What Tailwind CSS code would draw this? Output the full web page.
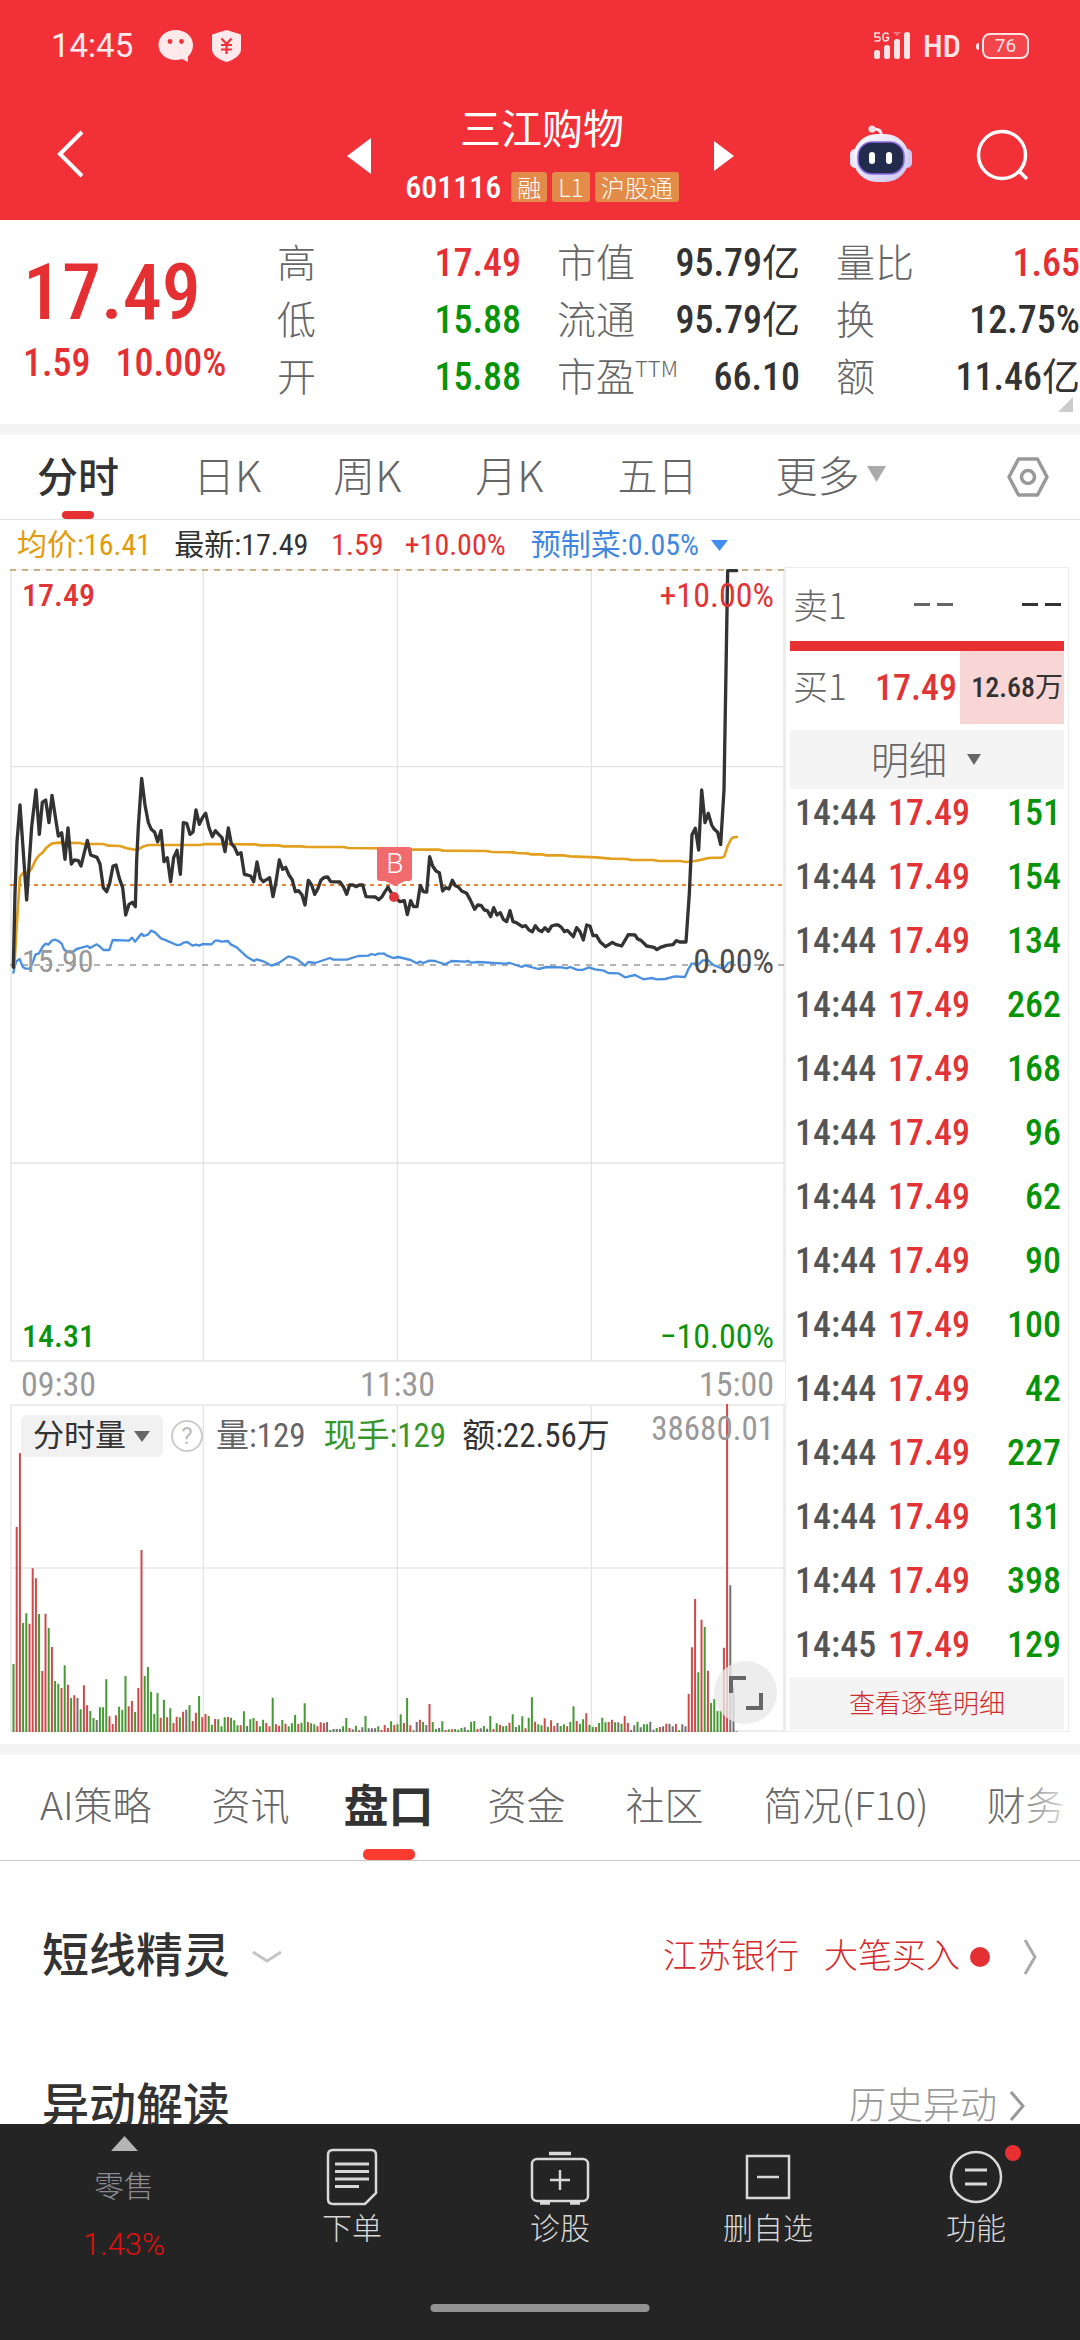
<!DOCTYPE html>
<html lang="zh-CN">
<head>
<meta charset="utf-8">
<meta name="viewport" content="width=device-width, initial-scale=1">
<title>三江购物 601116</title>
<script src="https://cdn.jsdelivr.net/npm/@tailwindcss/browser@4"></script>
</head>
<body class="flex h-screen flex-col overflow-hidden bg-white font-['Roboto_Condensed','Noto_Sans_CJK_SC',sans-serif] text-[#333]">

<header class="shrink-0 bg-[#f13038] text-white">
  <!-- status bar -->
  <div class="flex h-[92px] items-center px-[51px]">
    <span class="font-['Roboto','Noto_Sans_CJK_SC',sans-serif] text-[33px] leading-10 text-white/90">14:45</span>
    <svg class="ml-[25px] h-8 w-[36px]" viewBox="0 0 36 32" fill="#ffe9ea"><path d="M17.500 0C27.500 0 35 6.500 35 15c0 5-2 8.500-5 11.500l0 5.500-6-3a21 21 0 0 1-6.500 1C8 30 .5 23.500.5 15S8 0 17.500 0z"/><circle cx="12" cy="11.500" r="2.400" fill="#f13038"/><circle cx="23.500" cy="11.500" r="2.400" fill="#f13038"/></svg>
    <svg class="ml-[18px] h-8 w-[29px]" viewBox="0 0 29 32"><path d="M14.500 0 29 4.500V19c0 6-6 10.500-14.500 13C6 29.500 0 25 0 19V4.500z" fill="#ffe9ea"/><path d="M9.500 8.500l5 5.500 5-5.500M14.500 14v10M9 15h11M9 19.500h11" fill="none" stroke="#f13038" stroke-width="2.200"/></svg>
    <svg class="ml-auto h-[30px] w-[40px]" viewBox="0 0 40 30" fill="#ffe3e5"><rect x="1" y="19" width="6" height="9" rx="2.500"/><rect x="11" y="14" width="6" height="14" rx="2.500"/><rect x="21" y="8" width="6" height="20" rx="2.500"/><rect x="31" y="1" width="6" height="27" rx="2.500"/><path d="M20 1h8l-4 4z" opacity=".4"/><path d="M7 2H2v4h3.500q1.500 0 1.500 2t-1.500 2H1.500M15.500 3.500Q15 2 12.500 2 10 2 10 6t2.500 4q3 0 3-3.500h-2.500" fill="none" stroke="#ffe3e5" stroke-width="1.600"/></svg>
    <span class="ml-[10px] text-[32px] leading-10 font-medium text-[#ffe3e5]">HD</span>
    <span class="ml-[15px] flex items-center">
      <span class="mr-[3px] h-[7px] w-[3px] rounded-l bg-[#ffe3e5]"></span>
      <span class="flex h-[26px] w-[47px] items-center justify-center rounded-lg border-2 border-[#ffe3e5] bg-white/10 font-['Roboto',sans-serif] text-[19px] leading-5 text-[#ffe3e5]">76</span>
    </span>
  </div>
  <!-- title bar -->
  <div class="flex h-32 items-start px-[52px]">
    <div class="flex flex-1 pt-[37px] pl-1">
      <button type="button" aria-label="返回"><svg class="h-[50px] w-[30px]" viewBox="0 0 30 50" fill="none" stroke="#fff" stroke-width="4"><path d="M26 3 4 25l22 22"/></svg></button>
    </div>
    <button type="button" aria-label="上一只" class="pt-[45px]"><svg class="h-[38px] w-6" viewBox="0 0 24 38"><path d="M24 1v36L0 19z" fill="#fff"/></svg></button>
    <div class="flex w-[343px] flex-col items-center">
      <h1 class="pt-[4px] font-['Noto_Sans_CJK_SC',sans-serif] text-[41px] leading-[60px]">三江购物</h1>
      <div class="mt-[13px] flex items-center gap-[5px] text-[32px] leading-[36px]">
        <span class="mr-[5px] font-medium">601116</span>
        <span class="rounded-[3px] bg-[#e38b49] px-[6px] font-['Noto_Sans_CJK_SC',sans-serif] text-[24px] leading-[30px] font-light">融</span>
        <span class="rounded-[3px] bg-[#e38b49] px-[6px] font-['Noto_Sans_CJK_SC',sans-serif] text-[24px] leading-[30px] font-light">L1</span>
        <span class="rounded-[3px] bg-[#e38b49] px-[6px] font-['Noto_Sans_CJK_SC',sans-serif] text-[24px] leading-[30px] font-light">沪股通</span>
      </div>
    </div>
    <button type="button" aria-label="下一只" class="pt-[47px] pr-1"><svg class="h-[34px] w-5" viewBox="0 0 20 34"><path d="M0 2v30l20-15z" fill="#fff"/></svg></button>
    <div class="flex flex-1 justify-end gap-[64px] pt-[33px]">
      <button type="button" aria-label="智能助手"><svg class="h-[58px] w-[62px]" viewBox="0 0 62 58">
        <defs><linearGradient id="shell" x1="0" y1="0" x2="1" y2="1"><stop offset="0" stop-color="#fff"/><stop offset="1" stop-color="#c9c3f0"/></linearGradient></defs>
        <path d="M22 4q10-1 9 7" fill="none" stroke="#f3e9f7" stroke-width="3"/><circle cx="22" cy="4" r="3.600" fill="#f3e0ea"/>
        <rect x="0" y="24" width="10" height="19" rx="5" fill="#ece6f8"/><rect x="52" y="24" width="10" height="19" rx="5" fill="#cfc8f2"/>
        <rect x="3" y="9" width="56" height="48" rx="24" fill="url(#shell)"/>
        <rect x="8" y="17" width="46" height="32" rx="14" fill="#232b4d" stroke="#8a6be0" stroke-width="1.500"/>
        <rect x="19" y="27" width="6" height="12" rx="3" fill="#fff"/><rect x="36" y="27" width="6" height="12" rx="3" fill="#fff"/></svg></button>
      <button type="button" aria-label="搜索"><svg class="h-[54px] w-[52px]" viewBox="0 0 52 54" fill="none" stroke="#fff" stroke-width="3.500"><circle cx="26" cy="28" r="23.500"/><path d="M42 43l9 9"/></svg></button>
    </div>
  </div>
</header>

<main class="min-h-0 flex-1 overflow-hidden">
  <!-- quote summary -->
  <section class="relative flex h-[204px] pt-[15px]">
    <div class="w-[277px] pl-[23px] font-medium text-[#e53033]">
      <p class="pt-[10px] text-[78px] leading-[96px]">17.49</p>
      <p class="flex gap-[25px] text-[38px] leading-[44px]"><span>1.59</span><span>10.00%</span></p>
    </div>
    <dl class="grid flex-1 grid-cols-[244px_243px_1fr] content-start gap-x-9 text-[38px] leading-[57px] font-medium">
      <div class="flex justify-between"><dt class="font-['Noto_Sans_CJK_SC',sans-serif] text-[39px] leading-[51px] font-light text-[#666]">高</dt><dd class="text-[#e53033]">17.49</dd></div>
      <div class="flex justify-between"><dt class="font-['Noto_Sans_CJK_SC',sans-serif] text-[39px] leading-[51px] font-light text-[#666]">市值</dt><dd>95.79<span class="font-normal">亿</span></dd></div>
      <div class="flex justify-between"><dt class="font-['Noto_Sans_CJK_SC',sans-serif] text-[39px] leading-[51px] font-light text-[#666]">量比</dt><dd class="text-[#e53033]">1.65</dd></div>
      <div class="flex justify-between"><dt class="font-['Noto_Sans_CJK_SC',sans-serif] text-[39px] leading-[51px] font-light text-[#666]">低</dt><dd class="text-[#089408]">15.88</dd></div>
      <div class="flex justify-between"><dt class="font-['Noto_Sans_CJK_SC',sans-serif] text-[39px] leading-[51px] font-light text-[#666]">流通</dt><dd>95.79<span class="font-normal">亿</span></dd></div>
      <div class="flex justify-between"><dt class="font-['Noto_Sans_CJK_SC',sans-serif] text-[39px] leading-[51px] font-light text-[#666]">换</dt><dd>12.75%</dd></div>
      <div class="flex justify-between"><dt class="font-['Noto_Sans_CJK_SC',sans-serif] text-[39px] leading-[51px] font-light text-[#666]">开</dt><dd class="text-[#089408]">15.88</dd></div>
      <div class="flex justify-between"><dt class="flex font-['Noto_Sans_CJK_SC',sans-serif] text-[39px] leading-[51px] font-light text-[#666]">市盈<span class="text-[22px] leading-9">TTM</span></dt><dd>66.10</dd></div>
      <div class="flex justify-between"><dt class="font-['Noto_Sans_CJK_SC',sans-serif] text-[39px] leading-[51px] font-light text-[#666]">额</dt><dd>11.46<span class="font-normal">亿</span></dd></div>
    </dl>
    <svg class="absolute right-[7px] bottom-[12px] h-[15px] w-[15px]" viewBox="0 0 15 15"><path d="M15 0v15H0z" fill="#ccc"/></svg>
  </section>

  <div class="h-[11px] bg-[#f4f4f4]"></div>

  <!-- period tabs -->
  <nav class="flex h-[85px] items-center border-b border-[#e2e2e2] pr-[31px] pl-[37px] font-['Noto_Sans_CJK_SC',sans-serif] text-[42px] leading-[78px] font-light text-[#666]">
    <button type="button" class="relative mr-[74px] pb-[6px] text-[41px] font-medium text-[#333]">分时<span class="absolute bottom-0 left-[25px] h-2 w-[32px] rounded bg-[#e53033]"></span></button>
    <button type="button" class="mr-[72px] pb-[6px]">日K</button>
    <button type="button" class="mr-[74px] pb-[6px]">周K</button>
    <button type="button" class="mr-[74px] pb-[6px]">月K</button>
    <button type="button" class="mr-[78px] pb-[6px] text-[40px]">五日</button>
    <button type="button" class="flex items-center gap-[7px] pb-[6px]">更多<svg class="h-4 w-[19px]" viewBox="0 0 19 16"><path d="M0 0h19l-9.500 16z" fill="#aaa"/></svg></button>
    <button type="button" aria-label="设置" class="ml-auto"><svg class="h-[40px] w-[42px]" viewBox="0 0 42 40" fill="none" stroke="#999" stroke-width="3.500" stroke-linejoin="round"><path d="M11.500 2h19L40 20l-9.500 18h-19L2 20z"/><circle cx="21" cy="20" r="6.500"/></svg></button>
  </nav>

  <div class="flex h-[47px] items-center pt-[3px] pl-[17px] text-[30px] leading-[44px]">
    <span class="mr-[23px] text-[#e39b0b]">均价:16.41</span>
    <span class="mr-[23px]">最新:17.49</span>
    <span class="mr-[21px] text-[#e53033]">1.59</span>
    <span class="mr-[25px] text-[#e53033]">+10.00%</span>
    <button type="button" class="flex items-center gap-[12px] text-[#3f87e0]">预制菜:0.05%<svg class="h-[11px] w-[17px]" viewBox="0 0 17 11"><path d="M0 0h17l-8.500 11z" fill="#3f8ef0"/></svg></button>
  </div>

  <div class="flex pr-[11px] pl-[10px]">
    <!-- charts -->
    <div class="min-w-0 flex-1 pt-[2px]">
      <div class="relative h-[793px] text-[34px] leading-9">
        <svg class="absolute inset-0 h-full w-full" viewBox="30 27 2325 2379" preserveAspectRatio="none" fill="none">
          <g stroke="#e4e4e4" stroke-width="4"><path d="M610 27v2379M1192 27v2379M1774 27v2379M30 620h2325M30 1809h2325"/></g>
          <rect x="33" y="28" width="2319" height="2375" stroke="#ececec" stroke-width="6"/>
          <path d="M30 30h2325" stroke="#c09b62" stroke-width="5" stroke-dasharray="18 18"/>
          <path d="M30 975h2325" stroke="#ea8433" stroke-width="6" stroke-dasharray="12 12"/>
          <path d="M30 1215h2325" stroke="#999" stroke-width="5" stroke-dasharray="18 18"/>
          <g stroke-linejoin="round" stroke-linecap="round">
            <g stroke="#4a8fe0" stroke-width="7">
              <polyline points="40,1238 48,1205 59,1197 68,1220 77,1226 90,1226 97,1210 107,1183 117,1180 128,1160 137,1151 145,1154 155,1142 165,1139 175,1143 185,1151 192,1168 200,1175 215,1178 230,1167 245,1163 262,1158 270,1164 290,1153 300,1160 310,1170 328,1170 338,1140 387,1142 396,1133 405,1145 424,1121 432,1128 445,1123 453,1112 465,1117 483,1135 500,1142 530,1155 541,1154 550,1148 562,1146 578,1157 588,1154 598,1157 608,1152 635,1153 645,1142 655,1142 665,1145 684,1143 692,1153 710,1162 740,1190 762,1203 770,1198 790,1204 815,1217 838,1208 865,1189 880,1193 893,1199 915,1217 925,1206 945,1209 990,1194 1000,1199 1040,1199 1075,1188 1105,1187 1115,1182 1125,1185 1135,1181 1152,1181"/>
              <polyline transform="translate(1140 600)" points="12,581 20,586 40,594 55,591 92,600 110,610 120,605 130,609 148,602 165,603 195,613 215,603 255,605 265,603 273,608 295,606 375,611 390,609 425,621 435,616 475,627 500,621 545,622 560,625 570,621 590,629 607,630 627,622 645,628 672,632 685,639 715,640 735,652 765,645 790,658 815,654 830,658 855,657 885,649 915,651 925,628 935,611 960,610 968,601 985,601 1000,615 1022,624 1033,624 1045,609 1058,605"/>
            </g>
            <g stroke="#e3a01e" stroke-width="8">
              <polyline points="43,1220 50,1100 60,950 70,938 85,938 95,925 108,898 118,885 128,878 140,862 155,851 175,848 240,849 250,852 310,852 325,857 360,858 385,866 412,870 428,860 445,855 600,855 615,852 765,853 780,856 835,856 850,859 905,859 920,861 1030,861 1045,864 1175,865"/>
              <polyline transform="translate(1140 600)" points="35,265 95,269 175,269 190,272 320,273 335,276 400,277 410,279 440,280 455,283 485,283 500,286 550,286 570,289 650,292 690,296 740,297 755,300 820,300 835,303 900,303 920,306 945,303 965,299 985,294 1025,293 1033,289 1043,258 1053,238 1060,232 1071,231"/>
            </g>
            <g stroke="#333" stroke-width="10">
              <polyline points="40,1222 45,1000 51,845 60,735 80,1020 95,800 108,690 118,823 127,727 137,720 147,788 156,706 175,828 185,818 195,898 204,804 214,912 223,900 235,902 243,918 262,841 272,885 291,892 300,912 310,983 320,995 329,970 339,918 348,915 358,955 368,983 377,1065 387,1033 397,1027 406,1040 410,900 415,800 425,655 435,735 445,788 454,808 464,817 473,845 483,812 492,905 502,893 512,965 521,893 531,871 541,943 550,788 560,790 570,823 579,816 588,750 598,793 608,772 617,760 627,803 637,830 646,812 656,823 666,833 675,875 685,804 694,851 704,862 713,883 723,878 733,943 742,945 752,948 761,965 771,906 781,955 790,965 809,953 819,1010 828,965 838,900 848,928 857,922 867,945 877,960 886,995 896,992 906,1005 915,1035 925,961 935,975 944,1003 954,985 963,960 973,952 983,951 992,965 1020,966 1030,980 1040,1003 1049,975 1059,975 1068,980 1078,975 1088,975 1098,1010 1126,1011 1136,1019 1146,1010 1155,995 1164,982"/>
              <polyline transform="translate(1140 600)" points="24,382 41,410 60,425 73,422 82,464 92,422 101,440 111,440 121,376 130,395 140,396 149,290 158,318 168,333 178,338 188,393 197,383 207,387 217,361 226,377 235,381 245,393 260,400 270,418 284,448 293,435 303,436 313,450 322,452 332,470 341,443 351,465 361,458 370,478 380,485 390,452 399,485 409,488 427,500 437,497 447,510 457,515 466,497 476,510 485,515 495,503 505,514 515,498 525,495 535,495 545,503 553,515 562,511 580,530 590,503 600,515 610,540 620,495 630,498 639,527 649,526 660,545 677,560 697,547 707,553 725,558 745,524 765,525 773,537 783,541 800,558 822,562 831,569 841,562 860,556 879,554 889,542 899,546 918,546 928,400 936,224 946,205 956,270 965,90 975,188 985,160 995,195 1003,208 1013,217 1022,254 1032,90 1043,-568 1070,-568"/>
            </g>
            <circle cx="1182" cy="1011" r="15" fill="#e0383c"/>
          </g>
        </svg>
        <span class="absolute top-[8px] left-[12px] text-[32px] font-medium text-[#e03436]">17.49</span>
        <span class="absolute top-[8px] right-[11px] text-[#e03436]">+10.00%</span>
        <span class="absolute top-[374px] left-[12px] text-[32px] text-[#999]">15.90</span>
        <span class="absolute top-[374px] right-[11px] text-[#4c4c4c]">0.00%</span>
        <span class="absolute bottom-[8px] left-[12px] text-[32px] font-medium text-[#0b940b]">14.31</span>
        <span class="absolute right-[11px] bottom-[8px] text-[#0b940b]">−10.00%</span>
        <div class="absolute top-[278px] left-[47.400%] flex w-[35px] flex-col items-center text-white">
          <span class="flex h-[34px] w-full items-center justify-center rounded-[3px] bg-[#f06a6e] font-['Roboto',sans-serif] text-[28px] leading-[34px] font-light">B</span>
          <svg class="h-[5px] w-5" viewBox="0 0 20 5"><path d="M0 0h20L10 5z" fill="#f06a6e"/></svg>
        </div>
      </div>
      <div class="grid h-[42px] grid-cols-3 px-[11px] text-[34px] leading-[44px] text-[#999]">
        <span>09:30</span><span class="text-center">11:30</span><span class="text-right">15:00</span>
      </div>
      <div class="relative h-[328px]">
        <svg class="absolute inset-0 h-full w-full" viewBox="30 312 2325 984" preserveAspectRatio="none" fill="none">
          <path d="M610 312v984M1192 312v984M1774 312v984" stroke="#e4e4e4" stroke-width="4"/>
          <path d="M30 804h2325" stroke="#ececec" stroke-width="6"/>
          <rect x="33" y="315" width="2319" height="978" stroke="#ececec" stroke-width="6"/>
          <path id="up" stroke="#d04a4a" stroke-width="6"/>
          <path id="down" stroke="#459a35" stroke-width="6"/>
          <path id="flat" stroke="#707070" stroke-width="6"/>
        </svg>
        <div class="relative flex items-center justify-between pt-[11px] pr-[11px] pl-[11px] text-[33px] leading-[42px]">
          <div class="flex items-center">
            <button type="button" class="flex items-center gap-[8px] rounded-md bg-[#f1f1f1] pr-[13px] pl-[12px] text-[31px]">分时量<svg class="h-[11px] w-[16px]" viewBox="0 0 16 11"><path d="M0 0h16L8 11z" fill="#666"/></svg></button>
            <button type="button" aria-label="说明" class="ml-2 flex h-8 w-8 items-center justify-center rounded-full border-2 border-[#ccc] font-['Roboto',sans-serif] text-[24px] leading-7 text-[#bbb]">?</button>
            <span class="ml-[13px] text-[#666]">量:129</span>
            <span class="ml-[18px] text-[#38962a]">现手:129</span>
            <span class="ml-[16px]">额:22.56万</span>
          </div>
          <span class="pb-[14px] leading-7 text-[#999]">38680.01</span>
        </div>
        <button type="button" aria-label="全屏" class="absolute right-[8px] bottom-[8px] flex h-[63px] w-[63px] items-center justify-center rounded-full bg-[#e8e8e8]/80"><svg class="h-[34px] w-[34px]" viewBox="0 0 34 34" fill="none" stroke="#666" stroke-width="4"><path d="M2 17V2h15M32 17v15H17"/></svg></button>
      </div>
    </div>

    <!-- order book and trade list -->
    <aside class="w-[284px] shrink-0 border border-[#ececec] px-[4px] text-[36px] font-medium">
      <div class="flex h-[73px] items-center pr-[3px] pl-[3px]">
        <span class="w-[121px] font-['Noto_Sans_CJK_SC',sans-serif] text-[35px] font-light text-[#666]">卖1</span>
        <span class="flex flex-1 gap-[7px]"><i class="h-[3px] w-[16px] bg-[#666]"></i><i class="h-[3px] w-[16px] bg-[#666]"></i></span>
        <span class="flex gap-[7px]"><i class="h-[3px] w-[16px] bg-[#333]"></i><i class="h-[3px] w-[16px] bg-[#333]"></i></span>
      </div>
      <div class="h-[10px] bg-[#e83033]"></div>
      <div class="flex h-[73px] items-center pl-[3px]">
        <span class="w-[82px] pb-1 font-['Noto_Sans_CJK_SC',sans-serif] text-[35px] font-light text-[#666]">买1</span>
        <span class="flex-1 text-[#e03436]">17.49</span>
        <span class="flex h-full w-[104px] items-center justify-end bg-[#f9d6d6] pr-px text-[28px]">12.68<span class="font-normal">万</span></span>
      </div>
      <button type="button" class="mt-[6px] flex h-[59px] w-full items-center justify-center gap-[20px] bg-[#f4f4f4] pr-[2px] font-['Noto_Sans_CJK_SC',sans-serif] text-[38px] leading-[54px] font-light text-[#666]"><span class="pb-1">明细</span><svg class="h-[11px] w-[14px]" viewBox="0 0 14 11"><path d="M0 0h14L7 11z" fill="#666"/></svg></button>
      <table class="w-full table-fixed leading-[48px]"><colgroup><col class="w-[98px]"><col class="w-[90px]"><col></colgroup><tbody id="trades"></tbody></table>
      <a href="#" class="block h-[53px] bg-[#f4f4f4] text-center font-['Noto_Sans_CJK_SC',sans-serif] text-[26px] leading-[49px] font-light text-[#cf2b2b]">查看逐笔明细</a>
    </aside>
  </div>

  <div class="mt-[12px] h-[11px] bg-[#f4f4f4]"></div>

  <!-- content tabs -->
  <nav class="relative flex h-[106px] items-center overflow-hidden border-b border-[#c8c8c8] pl-[40px] font-['Noto_Sans_CJK_SC',sans-serif] text-[39px] leading-[97px] font-light whitespace-nowrap text-[#666]">
    <a href="#" class="mr-[60px] pb-2">AI策略</a>
    <a href="#" class="mr-[54px] pb-2">资讯</a>
    <a href="#" class="relative mr-[54px] pb-2 text-[45px] font-bold text-[#333]">盘口<span class="absolute bottom-0 left-[19px] h-[11px] w-[52px] rounded-[5px] bg-[#fb3a30]"></span></a>
    <a href="#" class="mr-[60px] pb-2">资金</a>
    <a href="#" class="mr-[60px] pb-2">社区</a>
    <a href="#" class="mr-[58px] pb-2">简况(F10)</a>
    <a href="#" class="pb-2">财务</a>
    <span class="absolute top-0 right-0 h-full w-[70px] bg-linear-to-r from-white/0 to-white"></span>
  </nav>

  <section class="flex h-[192px] items-center pr-[43px] pl-[42px] font-['Noto_Sans_CJK_SC',sans-serif]">
    <h2 class="pb-[10px] text-[47px] leading-[60px] font-medium">短线精灵</h2>
    <svg class="ml-[22px] h-3 w-[30px]" viewBox="0 0 30 12" fill="none" stroke="#c4c4c4" stroke-width="3"><path d="M1 1l14 9 14-9"/></svg>
    <span class="ml-auto pb-2 text-[34px] font-light text-[#d42a2c]">江苏银行</span>
    <span class="ml-[25px] pb-2 text-[34px] font-light text-[#d42a2c]">大笔买入</span>
    <span class="ml-[10px] h-5 w-5 rounded-full bg-[#e53033]"></span>
    <svg class="ml-[34px] h-[36px] w-[13px]" viewBox="0 0 13 36" fill="none" stroke="#aaa" stroke-width="3"><path d="M1 1l10 17L1 35"/></svg>
  </section>
  <section class="flex h-[106px] items-center pr-[54px] pl-[42px] font-['Noto_Sans_CJK_SC',sans-serif]">
    <h2 class="pb-[8px] text-[47px] leading-[60px] font-medium">异动解读</h2>
    <a href="#" class="ml-auto flex items-center gap-[13px] text-[37px] font-light text-[#999]"><span class="pb-[4px]">历史异动</span><svg class="h-[30px] w-[16px]" viewBox="0 0 16 30" fill="none" stroke="#999" stroke-width="3"><path d="M1 1l12 14L1 29"/></svg></a>
  </section>
</main>

<!-- bottom bar -->
<nav class="relative flex h-[216px] shrink-0 bg-[#242424] font-['Noto_Sans_CJK_SC',sans-serif] text-[30px] leading-10 font-light text-[#d8d8d8]">
  <a href="#" class="flex w-[248px] flex-col items-center pt-[12px] text-[#8b8b95]">
    <svg class="h-[15px] w-[27px]" viewBox="0 0 27 15"><path d="M13.500 0 27 15H0z" fill="#b4b4b4"/></svg>
    <span class="pt-[13px]">零售</span>
    <span class="pt-[21px] font-['Roboto',sans-serif] text-[31px] text-[#e01010]">1.43%</span>
  </a>
  <div class="grid flex-1 grid-cols-4">
    <a href="#" class="flex flex-col items-center"><svg class="mt-[24px] h-[58px] w-[52px]" viewBox="0 0 52 58" fill="none" stroke="#d8d8d8" stroke-width="2.500"><path d="M7 2h38q5 0 5 5v38L39 56H7q-5 0-5-5V7q0-5 5-5z"/><path d="M9 16h34M9 23.500h34M9 31h34M9 38.500h24" stroke-width="3"/></svg><span>下单</span></a>
    <a href="#" class="flex flex-col items-center"><svg class="mt-[24px] h-[58px] w-[60px]" viewBox="0 0 60 58" fill="none" stroke="#d8d8d8" stroke-width="2.500"><rect x="2" y="11" width="56" height="42" rx="5"/><path d="M19 5.500h22M10 55h10M40 55h10" stroke-width="3.500"/><path d="M20 32h20M30 22v20"/></svg><span>诊股</span></a>
    <a href="#" class="flex flex-col items-center"><svg class="mt-[24px] h-[58px] w-[46px]" viewBox="0 0 46 58" fill="none" stroke="#d8d8d8" stroke-width="2.500"><rect x="2" y="8" width="42" height="42"/><path d="M12 29h22"/></svg><span>删自选</span></a>
    <a href="#" class="relative flex flex-col items-center"><svg class="mt-[24px] h-[58px] w-[56px]" viewBox="0 0 56 58" fill="none" stroke="#d8d8d8" stroke-width="2.500"><circle cx="28" cy="29" r="25"/><path d="M17 22h22M17 36h22" stroke-width="3"/></svg><span>功能</span><span class="absolute top-[21px] left-1/2 ml-[29px] h-4 w-4 rounded-full bg-[#e83033]"></span></a>
  </div>
  <span class="absolute bottom-[28px] left-1/2 h-2 w-[219px] -translate-x-1/2 rounded bg-[#929292]"></span>
</nav>

<script>
  const volumes = [151, 154, 134, 262, 168, 96, 62, 90, 100, 42, 227, 131, 398, 129];
  document.getElementById('trades').innerHTML = volumes.map((v, i) =>
    `<tr class="h-[64px] align-top last:h-[56px]"><td class="p-0 pl-[5px] text-[#555]">14:${i === 13 ? 45 : 44}</td><td class="p-0 text-[#e03436]">17.49</td><td class="p-0 pr-[3px] text-right text-[#089408]">${v}</td></tr>`).join('');

  // per-minute volume: u = up, d = down, f = flat, followed by the bar height
  const bars = 'd204 u615 u837 d327 d356 u325 u491 u461 d354 u183 u355 d312 u255 d153 d145 u132 d200 u142 d102 u110 f102 d68 u140 u80 d63 d42 f36 d74 d74 d158 u47 u24 u50 d76 d66 d168 u77 u93 d60 u132 u546 d168 d195 d121 d54 d117 u43 d97 u44 d71 u27 u46 d44 u61 f67 d80 u33 u58 d108 u44 u54 d48 d22 u39 d38 d17 d44 u45 d43 d35 d20 u20 d62 f18 d38 d42 u33 d17 d37 u27 u17 d103 u23 u19 d36 u25 d17 d26 d51 u24 d28 d86 u30 d26 d23 u17 u29 u27 f30 d6 f9 f9 f9 d17 d42 u12 f8 d19 u5 f14 d48 f11 f11 f11 d17 u6 u21 u12 d32 u21 d23 d53 u27 d102 u20 d5 f30 u37 d30 f21 u84 d30 d9 f12 d32 u6 d8 u8 d9 d7 d12 f14 d6 d31 d33 u9 f11 d18 f10 d48 u9 d26 u22 d17 d19 u28 d53 f15 d20 d47 u11 d43 d104 u31 d23 d20 u41 d16 u35 u18 f27 d18 d23 u17 d30 d77 u33 d25 d38 u56 d22 d16 u15 d27 d43 d29 u30 u37 d29 f29 d25 u48 u27 f6 f20 d31 f14 d23 d23 f31 f7 d12 u15 f17 u25 f25 f17 u24 d5 f23 f17 u114 u254 u399 d179 u337 d315 u184 d87 d99 d63 d65 u253 u984 f440 f135 f2'.split(' ');
  const paths = { u: '', d: '', f: '' };
  bars.forEach((b, i) => { paths[b[0]] += `M${(40.5 + i * 9.6).toFixed(1)} 1296v-${b.slice(1)}`; });
  document.getElementById('up').setAttribute('d', paths.u);
  document.getElementById('down').setAttribute('d', paths.d);
  document.getElementById('flat').setAttribute('d', paths.f);
</script>
</body>
</html>
